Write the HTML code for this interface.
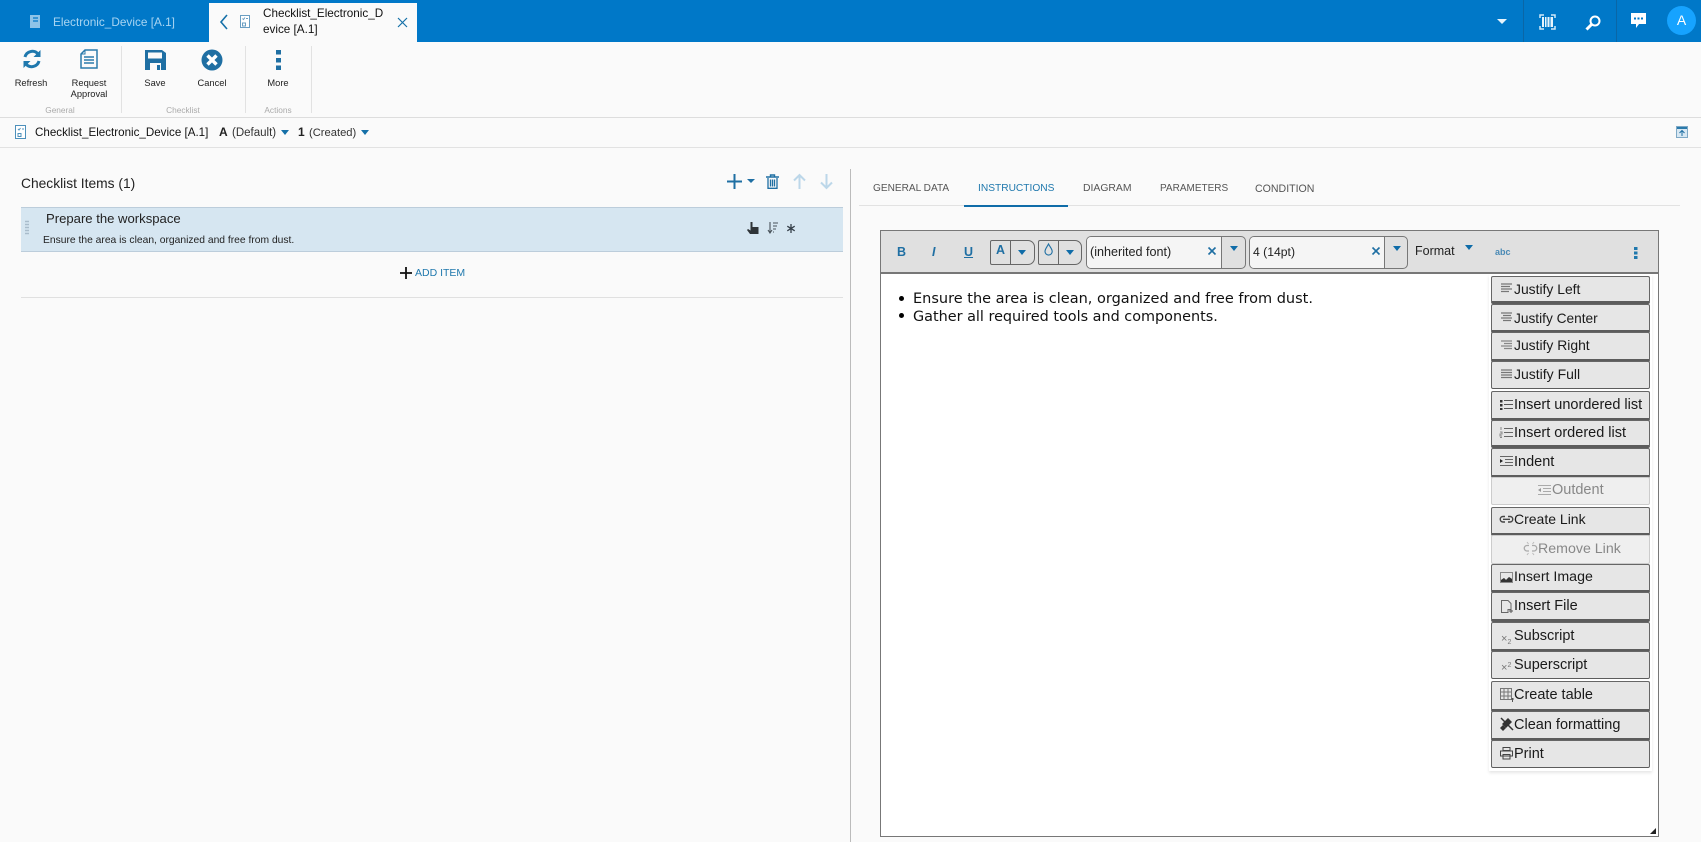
<!DOCTYPE html>
<html><head><meta charset="utf-8"><style>
html,body{margin:0;padding:0;width:1701px;height:842px;overflow:hidden;background:#fafafa}
*{box-sizing:border-box}
body{position:relative;font-family:"Liberation Sans",sans-serif;color:#222}
.a{position:absolute}
.t{position:absolute;white-space:nowrap;line-height:16px;height:16px}
.c{transform:translateX(-50%)}
svg{position:absolute;overflow:visible}
.m{position:absolute;left:1491px;width:159px;background:#e6e6e6;border:1px solid #666;border-bottom:3px solid #5c5c5c;border-radius:2px}
.m.d{background:#efefef;border:1px solid #ccc}
.mt{position:absolute;font-size:14.5px;white-space:nowrap;line-height:16px;left:1514px;color:#1a1a1a}
.tb{font-size:9.3px;color:#222}
.gl{font-size:8.3px;color:#aaa}
.tab{color:#555;top:181px}
.tri{position:absolute;width:0;height:0;border-left:4px solid transparent;border-right:4px solid transparent;border-top:5px solid #1570a8}
</style></head><body>
<div class="a" style="left:0;top:0;width:1701px;height:42px;background:#0078c8"></div>
<div class="a" style="left:209px;top:3px;width:208px;height:39px;background:#fafafa"></div>
<div class="a" style="left:1523px;top:0;width:1px;height:42px;background:#0a66a6"></div>
<div class="a" style="left:1616px;top:0;width:1px;height:42px;background:#0a66a6"></div>
<svg style="left:30px;top:15px" width="11" height="14"><path d="M0 0h10v13H0z" fill="#8fc4e8"/><path d="M3 3h5M3 6h5" stroke="#0078c8" stroke-width="1.2"/></svg>
<div class="t" style="left:53px;top:14px;font-size:11.8px;color:#a9d5f2">Electronic_Device [A.1]</div>
<svg style="left:219px;top:14px" width="10" height="16"><path d="M8 1L2 8l6 7" fill="none" stroke="#1570a8" stroke-width="1.6"/></svg>
<svg style="left:240px;top:15px" width="10" height="13"><path d="M.5.5h9v12h-9z" fill="#fff" stroke="#6a9ec2"/><path d="M2.5 3.500l1 1 1.500-2M6 3.500h2M2.500 8h3v3h-3z" fill="none" stroke="#6a9ec2"/></svg>
<div class="t" style="left:263px;top:6px;font-size:11.7px;color:#111">Checklist_Electronic_D</div>
<div class="t" style="left:263px;top:22px;font-size:11.7px;color:#111">evice [A.1]</div>
<svg style="left:397px;top:17px" width="11" height="11"><path d="M1 1l9 9M10 1l-9 9" stroke="#1570a8" stroke-width="1.200"/></svg>
<div class="a" style="left:1497px;top:19px;width:0;height:0;border-left:5px solid transparent;border-right:5px solid transparent;border-top:5px solid #e8f4fc"></div>
<svg style="left:1539px;top:14px" width="17" height="16"><path d="M1 4V1h4M12 1h4v3M1 12v3h4M12 15h4v-3" fill="none" stroke="#cfe8f8" stroke-width="1.500"/><path d="M3 3h11v10H3z" fill="#e8f4fc"/><path d="M5.500 3v10M8 3v10M11 3v10" stroke="#0078c8"/></svg>
<svg style="left:1585px;top:15px" width="16" height="16"><circle cx="10" cy="6" r="4.500" fill="none" stroke="#fff" stroke-width="2"/><path d="M7 9l-5.500 5.500" stroke="#fff" stroke-width="3"/></svg>
<svg style="left:1631px;top:13px" width="16" height="16"><path d="M0 0h15v11h-7l-3 4v-4H0z" fill="#fff"/><path d="M3 5.500h2M6.500 5.500h2M10 5.500h2" stroke="#0078c8" stroke-width="2"/></svg>
<div class="a" style="left:1667px;top:6px;width:29px;height:29px;border-radius:50%;background:#16a3ff"></div>
<div class="t c" style="left:1681.500px;top:12px;font-size:14px;color:#fff">A</div>

<div class="a" style="left:0;top:117px;width:1701px;height:1px;background:#ddd"></div>
<div class="a" style="left:0;top:147px;width:1701px;height:1px;background:#e2e2e2"></div>
<div class="a" style="left:121px;top:46px;width:1px;height:67px;background:#e2e2e2"></div>
<div class="a" style="left:245px;top:46px;width:1px;height:67px;background:#e2e2e2"></div>
<div class="a" style="left:311px;top:46px;width:1px;height:67px;background:#e2e2e2"></div>
<svg style="left:22px;top:49px" width="20" height="20"><path d="M3 8a7.500 7.500 0 0 1 13-3" fill="none" stroke="#1f78ad" stroke-width="3"/><path d="M18.500 1v7h-7z" fill="#1f78ad"/><path d="M17 12a7.500 7.500 0 0 1-13 3" fill="none" stroke="#1f78ad" stroke-width="3"/><path d="M1.500 19v-7h7z" fill="#1f78ad"/></svg>
<svg style="left:80px;top:49px" width="18" height="20"><path d="M5 1h12v18H1V5z" fill="#fafafa" stroke="#2a7aab" stroke-width="1.500"/><path d="M1 5h4V1" fill="none" stroke="#2a7aab"/><path d="M4 8h10M4 11h10M4 14h10" stroke="#2a7aab" stroke-width="1.500"/></svg>
<svg style="left:145px;top:50px" width="21" height="20"><path d="M0 0h17l4 3v17H0z" fill="#1f6fa3"/><path d="M3 2.500h14v6H3z" fill="#fafafa"/><path d="M5 13h11v7H5z" fill="#fafafa"/><path d="M12 15h3v5h-3z" fill="#1f6fa3"/></svg>
<svg style="left:201px;top:49px" width="22" height="22"><circle cx="11" cy="11" r="10.500" fill="#1f6fa3"/><path d="M6.500 6.500l9 9M15.500 6.500l-9 9" stroke="#fff" stroke-width="3.400"/></svg>
<svg style="left:276px;top:50px" width="5" height="20"><path d="M0 0h5v4.500H0zM0 8h5v4.500H0zM0 15.500h5V20H0z" fill="#1f6fa3"/></svg>
<div class="t c tb" style="left:31px;top:75px">Refresh</div>
<div class="t c tb" style="left:89px;top:75px">Request</div>
<div class="t c tb" style="left:89px;top:86px">Approval</div>
<div class="t c tb" style="left:155px;top:75px">Save</div>
<div class="t c tb" style="left:212px;top:75px">Cancel</div>
<div class="t c tb" style="left:278px;top:75px">More</div>
<div class="t c gl" style="left:60px;top:102px">General</div>
<div class="t c gl" style="left:183px;top:102px">Checklist</div>
<div class="t c gl" style="left:278px;top:102px">Actions</div>

<svg style="left:15px;top:125px" width="11" height="14"><path d="M.5.5h10v13H.5z" fill="#fff" stroke="#4d90bb"/><path d="M3 4l1 1 1.500-2M7 4h2M3 8.500h3v3H3z" fill="none" stroke="#4d90bb"/></svg>
<div class="t" style="left:35px;top:125px;font-size:11.6px;color:#111">Checklist_Electronic_Device [A.1]</div>
<div class="t" style="left:219px;top:124px;font-size:12px;font-weight:bold;color:#222">A</div>
<div class="t" style="left:232px;top:125px;font-size:11.5px;color:#333">(Default)</div>
<div class="tri" style="left:281px;top:130px"></div>
<div class="t" style="left:298px;top:124px;font-size:12px;font-weight:bold;color:#222">1</div>
<div class="t" style="left:309px;top:125px;font-size:11.2px;color:#333">(Created)</div>
<div class="tri" style="left:361px;top:130px"></div>
<svg style="left:1676px;top:126px" width="12" height="12"><path d="M0 0h12v12H0z" fill="#d8e8f3"/><path d="M0 0h12v3H0z" fill="#2a7aab"/><path d="M.5.500h11v11H.5z" fill="none" stroke="#7fa9c6"/><path d="M6 10V5M3.500 7L6 4.500 8.500 7" fill="none" stroke="#1f6fa3"/></svg>

<div class="t" style="left:21px;top:176px;font-size:13.8px;color:#222">Checklist Items (1)</div>
<svg style="left:727px;top:174px" width="15" height="15"><path d="M7.500 0v15M0 7.500h15" stroke="#1f6fa3" stroke-width="2"/></svg>
<div class="tri" style="left:747px;top:179px;border-top-color:#1f6fa3;border-top-width:4px"></div>
<svg style="left:766px;top:174px" width="13" height="15"><path d="M.0 3h13M4.500 3V1h4v2" fill="none" stroke="#1f6fa3" stroke-width="1.400"/><path d="M2 4v10.300h9V4M4.500 5.500v7M6.500 5.500v7M8.500 5.500v7" fill="none" stroke="#1f6fa3" stroke-width="1.300"/></svg>
<svg style="left:793px;top:174px" width="13" height="15"><path d="M6.500 15V1M1 6.500L6.500 1 12 6.500" fill="none" stroke="#bcd7e9" stroke-width="2"/></svg>
<svg style="left:820px;top:174px" width="13" height="15"><path d="M6.500 0v14M1 8.500L6.500 14 12 8.500" fill="none" stroke="#bcd7e9" stroke-width="2"/></svg>
<div class="a" style="left:21px;top:207px;width:822px;height:45px;background:#d6e6f1;border-top:1px solid #bccddb;border-bottom:1px solid #bccddb"></div>
<svg style="left:25px;top:221px" width="4" height="15"><path d="M0 .5h4M0 3.500h4M0 6.500h4M0 9.500h4M0 12.500h4" stroke="#a9bccb" stroke-width="1.500"/></svg>
<div class="t" style="left:46px;top:211px;font-size:13.100px;color:#222">Prepare the workspace</div>
<div class="t" style="left:43px;top:233px;font-size:10.300px;color:#222">Ensure the area is clean, organized and free from dust.</div>
<svg style="left:747px;top:222px" width="12" height="13"><path d="M3.500 0h2v5h6v7H3L0 8l1 -1 2.500 1.500z" fill="#2f3438"/></svg>
<svg style="left:768px;top:222px" width="11" height="12"><path d="M2 0v10M0 8l2 3 2-3M5 1h5M5 4h4M5 7h3M5 10h1" fill="none" stroke="#48525a" stroke-width="1.100"/></svg>
<svg style="left:787px;top:224px" width="8" height="9"><path d="M4 0v9M.3 2.200l7.400 4.600M7.700 2.200L.3 6.800" stroke="#36404a" stroke-width="1.300"/></svg>
<svg style="left:400px;top:267px" width="12" height="12"><path d="M6 0v12M0 6h12" stroke="#111" stroke-width="1.800"/></svg>
<div class="t" style="left:415px;top:265px;font-size:10.500px;color:#1f78ad">ADD ITEM</div>
<div class="a" style="left:21px;top:297px;width:822px;height:1px;background:#e0e0e0"></div>

<div class="a" style="left:850px;top:169px;width:1px;height:673px;background:#bbb"></div>
<div class="a" style="left:859px;top:205px;width:821px;height:1px;background:#e2e2e2"></div>
<div class="a" style="left:964px;top:205px;width:104px;height:2px;background:#0f6ca8"></div>
<div class="t tab" style="left:873px;font-size:10.1px">GENERAL DATA</div>
<div class="t tab" style="left:978px;color:#1f78ad;font-size:10.2px">INSTRUCTIONS</div>
<div class="t tab" style="left:1083px;font-size:10.4px">DIAGRAM</div>
<div class="t tab" style="left:1160px;font-size:10px">PARAMETERS</div>
<div class="t tab" style="left:1255px;font-size:10.6px">CONDITION</div>

<div class="a" style="left:880px;top:230px;width:779px;height:607px;background:#fff;border:1px solid #777"></div>
<div class="a" style="left:881px;top:231px;width:777px;height:43px;background:#e0e0e0;border-bottom:2px solid #777"></div>
<div class="t" style="left:897px;top:244px;font-size:12.5px;font-weight:bold;color:#1f6fa3">B</div>
<div class="t" style="left:932px;top:244px;font-size:12.5px;font-weight:bold;font-style:italic;color:#1f6fa3">I</div>
<div class="t" style="left:964px;top:244px;font-size:12.5px;font-weight:bold;text-decoration:underline;color:#1f6fa3">U</div>
<div class="a" style="left:990px;top:240px;width:45px;height:25px;border:1px solid #666;border-radius:2px 7px 7px 2px"></div>
<div class="a" style="left:1010px;top:240px;width:1px;height:25px;background:#666"></div>
<div class="t" style="left:996px;top:242px;font-size:12.5px;font-weight:bold;color:#1f6fa3">A</div>
<div class="tri" style="left:1018px;top:250px;border-top-color:#0f6ca8"></div>
<div class="a" style="left:1038px;top:240px;width:44px;height:25px;border:1px solid #666;border-radius:2px 7px 7px 2px"></div>
<div class="a" style="left:1058px;top:240px;width:1px;height:25px;background:#666"></div>
<svg style="left:1044px;top:243px" width="10" height="14"><path d="M4.500 1C3 4 1 6 1 8.500a3.600 3.600 0 0 0 7.200 0C8.200 6 6 4 4.500 1z" fill="none" stroke="#1f6fa3" stroke-width="1.100"/></svg>
<div class="tri" style="left:1066px;top:250px;border-top-color:#0f6ca8"></div>

<div class="a" style="left:1086px;top:236px;width:160px;height:33px;border:1px solid #777;border-radius:5px;background:#e0e0e0"></div>
<div class="a" style="left:1087px;top:237px;width:135px;height:31px;background:#f5f5f5;border-right:1px solid #777;border-radius:4px 0 0 4px"></div>
<div class="t" style="left:1090px;top:244px;font-size:12.6px;color:#222">(inherited font)</div>
<svg style="left:1208px;top:247px" width="8" height="8"><path d="M.5.5l7 7M7.500.5l-7 7" stroke="#1f6fa3" stroke-width="1.600"/></svg>
<div class="tri" style="left:1230px;top:246px;border-top-color:#0f6ca8"></div>
<div class="a" style="left:1249px;top:236px;width:159px;height:33px;border:1px solid #777;border-radius:5px;background:#e0e0e0"></div>
<div class="a" style="left:1250px;top:237px;width:135px;height:31px;background:#f5f5f5;border-right:1px solid #777;border-radius:4px 0 0 4px"></div>
<div class="t" style="left:1253px;top:244px;font-size:12.2px;color:#222">4 (14pt)</div>
<svg style="left:1372px;top:247px" width="8" height="8"><path d="M.5.5l7 7M7.500.5l-7 7" stroke="#1f6fa3" stroke-width="1.600"/></svg>
<div class="tri" style="left:1393px;top:246px;border-top-color:#0f6ca8"></div>
<div class="t" style="left:1415px;top:243px;font-size:12.500px;color:#222">Format</div>
<div class="tri" style="left:1465px;top:245px;border-top-color:#0f6ca8"></div>
<div class="t" style="left:1495px;top:244px;font-size:9px;font-weight:bold;color:#4a8ab5">abc</div>
<svg style="left:1634px;top:247px" width="4" height="12"><path d="M0 0h3.500v3H0zM0 4.500h3.500v3H0zM0 9h3.500v3H0z" fill="#1f78ad"/></svg>

<div class="a" style="left:899px;top:296px;width:5px;height:5px;border-radius:50%;background:#000"></div>
<div class="t" style="left:913px;top:291px;font-size:14.5px;font-family:'DejaVu Sans',sans-serif;color:#111">Ensure the area is clean, organized and free from dust.</div>
<div class="a" style="left:899px;top:313px;width:5px;height:5px;border-radius:50%;background:#000"></div>
<div class="t" style="left:913px;top:309px;font-size:14.4px;font-family:'DejaVu Sans',sans-serif;color:#111">Gather all required tools and components.</div>

<div class="a" style="left:1489px;top:274px;width:163px;height:497px;background:#fff;box-shadow:0 2px 3px rgba(0,0,0,.1)"></div>
<div class="m" style="top:276px;height:28px"></div>
<div class="m" style="top:304px;height:29px"></div>
<div class="m" style="top:332px;height:30px"></div>
<div class="m" style="top:361px;height:28px;border-bottom-width:1px"></div>
<div class="m" style="top:391px;height:30px"></div>
<div class="m" style="top:420px;height:28px"></div>
<div class="m" style="top:448px;height:30px"></div>
<div class="m d" style="top:477px;height:28px"></div>
<div class="m" style="top:507px;height:29px"></div>
<div class="m d" style="top:535px;height:29px"></div>
<div class="m" style="top:564px;height:29px"></div>
<div class="m" style="top:592px;height:30px"></div>
<div class="m" style="top:622px;height:30px"></div>
<div class="m" style="top:651px;height:28px;border-bottom-width:1px"></div>
<div class="m" style="top:681px;height:31px"></div>
<div class="m" style="top:711px;height:30px"></div>
<div class="m" style="top:740px;height:28px;border-bottom-width:1px"></div>

<svg style="left:1501px;top:283px" width="12" height="11"><path d="M0 1h11M0 3.500h9M0 6h11M0 8.500h8" stroke="#777" stroke-width="1.300"/></svg>
<svg style="left:1501px;top:312px" width="12" height="11"><path d="M0 1h11M2 3.500h8M0 6h11M2 8.500h8" stroke="#777" stroke-width="1.300"/></svg>
<svg style="left:1501px;top:340px" width="12" height="11"><path d="M0 1h11M3 3.500h8M0 6h11M3 8.500h8" stroke="#888" stroke-width="1.300"/></svg>
<svg style="left:1501px;top:369px" width="12" height="11"><path d="M0 1h11M0 3.500h11M0 6h11M0 8.500h11" stroke="#777" stroke-width="1.300"/></svg>
<svg style="left:1500px;top:399px" width="13" height="11"><path d="M0 1h2.500v2.500H0zM0 5h2.500v2.500H0zM0 9h2.500v2H0z" fill="#333"/><path d="M4 1.500h9M4 5.500h9M4 9.500h9" stroke="#555"/></svg>
<svg style="left:1500px;top:427px" width="13" height="11"><path d="M1 0v3M0 5h2v2H0v2h2M0 10.500h2" stroke="#888" fill="none"/><path d="M4 1.500h9M4 5.500h9M4 9.500h9" stroke="#666"/></svg>
<svg style="left:1500px;top:456px" width="13" height="11"><path d="M0 .5h13M5 3.500h8M5 6.500h8M0 9.500h13" stroke="#666"/><path d="M0 3l3 2-3 2z" fill="#222"/></svg>
<svg style="left:1538px;top:485px" width="13" height="11"><path d="M0 .5h13M5 3.500h8M5 6.500h8M0 9.500h13" stroke="#aaa"/><path d="M3 3L0 5l3 2z" fill="#999"/></svg>
<svg style="left:1500px;top:515px" width="13" height="9"><path d="M5 1.500H3a2.700 2.700 0 0 0 0 5.500h2M8 1.500h2a2.700 2.700 0 0 1 0 5.500H8M3 4.300h7" fill="none" stroke="#444" stroke-width="1.400"/></svg>
<svg style="left:1524px;top:542px" width="13" height="13"><path d="M5 3.500H3a2.700 2.700 0 0 0 0 5.500h2M8 3.500h2a2.700 2.700 0 0 1 0 5.500H8" fill="none" stroke="#aaa" stroke-width="1.300"/><path d="M3 0l1.500 2M10 0L8.500 2M3 13l1.500-2M10 13l-1.500-2" stroke="#bbb"/></svg>
<svg style="left:1500px;top:572px" width="13" height="11"><path d="M0 0h13v11H0z" fill="#888"/><path d="M1 1h11v6L9 5 6 8 4 6 1 8z" fill="#e6e6e6"/><path d="M1 10V8l3-2 2 2 3-3 3 2v3z" fill="#333"/></svg>
<svg style="left:1501px;top:600px" width="12" height="13"><path d="M.5.500H7l3 3v6H7v3H.5z" fill="none" stroke="#666"/><path d="M8 11h4M10 9v4" stroke="#555"/></svg>
<div class="t" style="left:1501px;top:631px;font-size:11px;color:#777">×<span style="font-size:7px;position:relative;top:2px">2</span></div>
<div class="t" style="left:1501px;top:660px;font-size:11px;color:#777">×<span style="font-size:7px;position:relative;top:-4px">2</span></div>
<svg style="left:1500px;top:688px" width="14" height="14"><path d="M.5.500h11v11H.5zM.5 4h11M.5 8h11M4 .5v11M8 .5v11" fill="none" stroke="#777"/><path d="M11 11h3M12.500 10v4" stroke="#555"/></svg>
<svg style="left:1500px;top:717px" width="14" height="14"><path d="M2 7l6-6 4 4-6 6z" fill="#333"/><path d="M1 1l12 12" stroke="#333" stroke-width="1.500"/><path d="M0 11l3-3 3 3-3 3z" fill="#333"/></svg>
<svg style="left:1500px;top:747px" width="13" height="13"><path d="M3 .5h7v3H3zM.5 4h12v5H.5zM3 7.500h7V12H3z" fill="#e6e6e6" stroke="#444"/></svg>

<div class="mt" style="top:281px;font-size:13.9px">Justify Left</div>
<div class="mt" style="top:311px;font-size:13.7px">Justify Center</div>
<div class="mt" style="top:337px;font-size:13.9px">Justify Right</div>
<div class="mt" style="top:366px;font-size:14px">Justify Full</div>
<div class="mt" style="top:397px">Insert unordered list</div>
<div class="mt" style="top:425px">Insert ordered list</div>
<div class="mt" style="top:454px">Indent</div>
<div class="mt" style="top:482px;left:1552px;color:#888">Outdent</div>
<div class="mt" style="top:511px;font-size:14px">Create Link</div>
<div class="mt" style="top:541px;left:1538px;color:#888;font-size:14.2px">Remove Link</div>
<div class="mt" style="top:569px;font-size:14.2px">Insert Image</div>
<div class="mt" style="top:598px">Insert File</div>
<div class="mt" style="top:628px">Subscript</div>
<div class="mt" style="top:657px">Superscript</div>
<div class="mt" style="top:687px">Create table</div>
<div class="mt" style="top:717px">Clean formatting</div>
<div class="mt" style="top:746px">Print</div>
<svg style="left:1650px;top:828px" width="6" height="6"><path d="M6 0v6H0z" fill="#222"/></svg>
</body></html>
